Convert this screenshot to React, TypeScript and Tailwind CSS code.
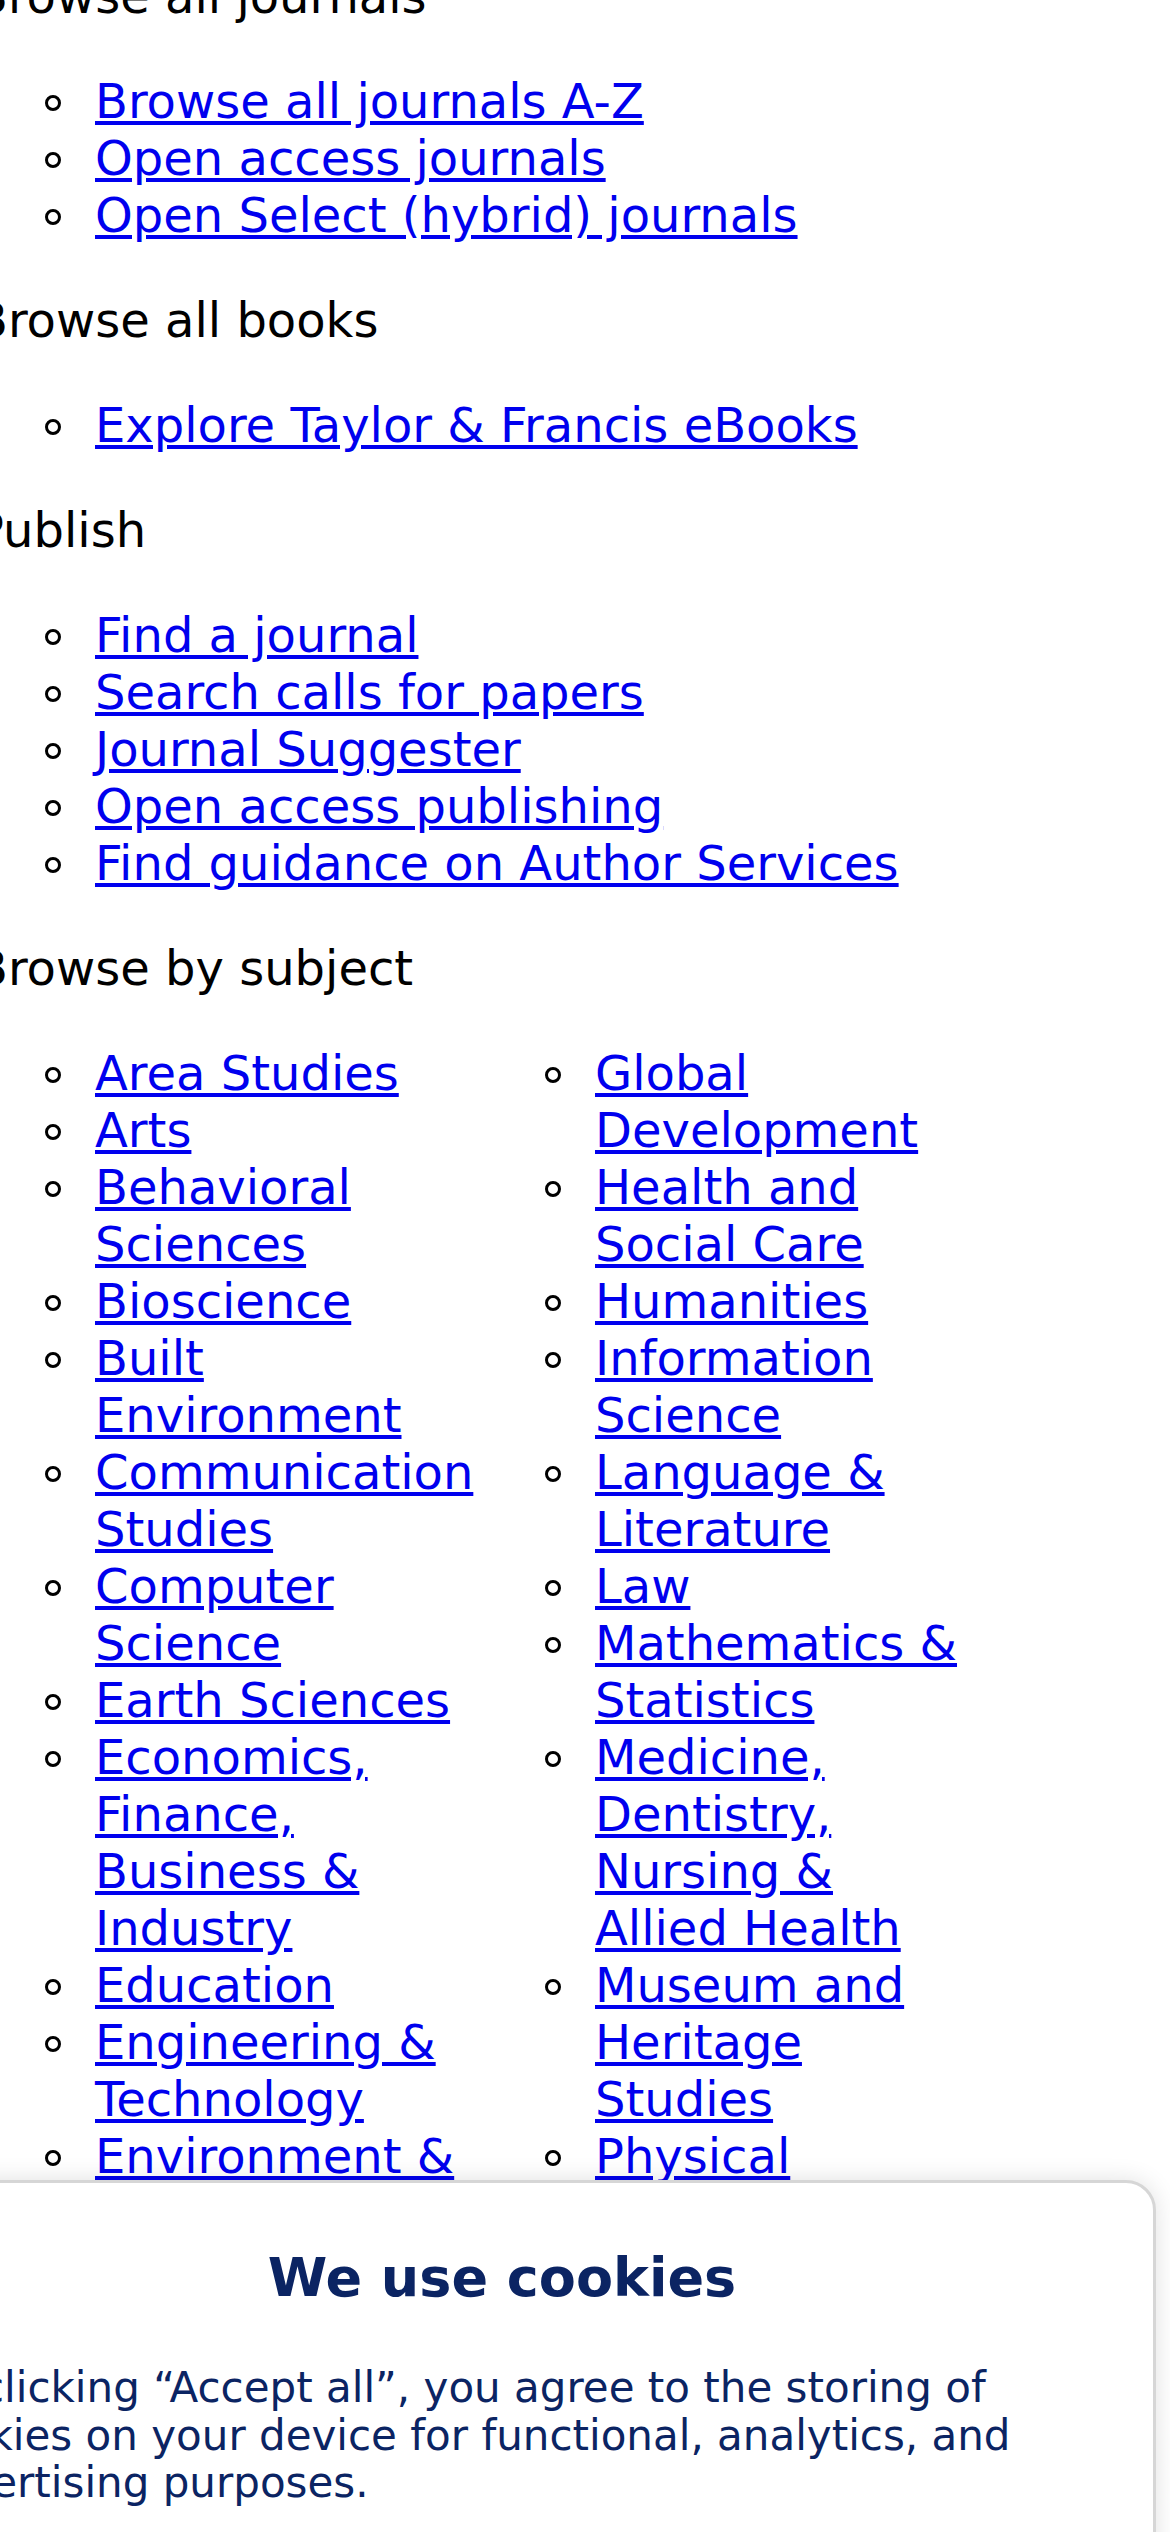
import React from "react";

const journals = ["Browse all journals A-Z", "Open access journals", "Open Select (hybrid) journals"];
const books = ["Explore Taylor & Francis eBooks"];
const publish = [
  "Find a journal",
  "Search calls for papers",
  "Journal Suggester",
  "Open access publishing",
  "Find guidance on Author Services",
];
const leftSubjects = [
  "Area Studies",
  "Arts",
  "Behavioral Sciences",
  "Bioscience",
  "Built Environment",
  "Communication Studies",
  "Computer Science",
  "Earth Sciences",
  "Economics, Finance, Business & Industry",
  "Education",
  "Engineering & Technology",
  "Environment & Agriculture",
  "Environment and Sustainability",
  "Food Science & Technology",
  "Geography",
];
const rightSubjects = [
  "Global Development",
  "Health and Social Care",
  "Humanities",
  "Information Science",
  "Language & Literature",
  "Law",
  "Mathematics & Statistics",
  "Medicine, Dentistry, Nursing & Allied Health",
  "Museum and Heritage Studies",
  "Physical Sciences",
  "Politics & International Relations",
  "Social Sciences",
  "Sports and Leisure",
  "Tourism, Hospitality and Events",
  "Urban Studies",
];

function LinkItem({ label }: { label: string }) {
  return (
    <li className="relative">
      <span className="absolute left-[-50px] top-[22px] h-[16px] w-[16px] rounded-full border-[3px] border-black" />
      <a href="#" className="text-[#0000ee] underline">
        {label}
      </a>
    </li>
  );
}

function LinkList({ items }: { items: string[] }) {
  return (
    <ul className="my-[48px] pl-[120px]">
      {items.map((t) => (
        <LinkItem key={t} label={t} />
      ))}
    </ul>
  );
}

export default function App() {
  return (
    <div className="relative h-[2532px] w-[1170px] overflow-hidden bg-white font-['DejaVu_Sans',sans-serif] text-[48px] leading-[57px] text-black">
      <div className="ml-[-25px] mt-[-32px]">
        <div>Browse all journals</div>
        <LinkList items={journals} />
        <div>Browse all books</div>
        <LinkList items={books} />
        <div>Publish</div>
        <LinkList items={publish} />
        <div>Browse by subject</div>
        <div className="my-[48px] flex">
          <ul className="w-[500px] shrink-0 pl-[120px]">
            {leftSubjects.map((t) => (
              <LinkItem key={t} label={t} />
            ))}
          </ul>
          <ul className="w-[500px] shrink-0 pl-[120px]">
            {rightSubjects.map((t) => (
              <LinkItem key={t} label={t} />
            ))}
          </ul>
        </div>
      </div>

      <div className="absolute left-[-152px] top-[2180px] h-[400px] w-[1308px] rounded-t-[30px] border-[3px] border-[#d6d6d6] bg-white px-[63px] pt-[63px] shadow-[0_0_24px_rgba(0,0,0,0.12)]">
        <h2 className="text-center text-[54px] font-bold leading-[63px] text-[#0b2463]">We use cookies</h2>
        <p className="mt-[55px] text-[42px] leading-[47.5px] text-[#0b2463]">
          By clicking “Accept all”, you agree to the storing of cookies on your device for functional, analytics, and
          advertising purposes.
        </p>
      </div>
    </div>
  );
}
